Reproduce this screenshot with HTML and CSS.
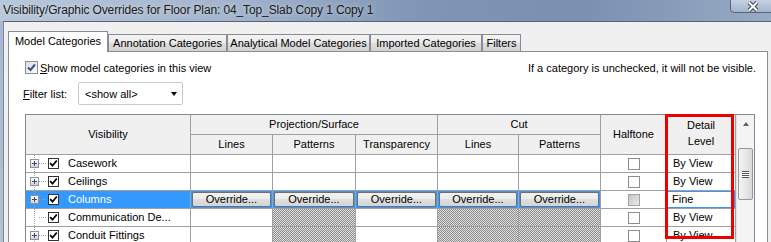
FILE: index.html
```html
<html lang="en">
<head>
<meta charset="UTF-8">
<title>Visibility/Graphic Overrides</title>
<link rel="stylesheet" href="styles.css">
</head>
<body>

<div class="window">
  <div class="titlebar">
    <span class="title">Visibility/Graphic Overrides for Floor Plan: 04_Top_Slab Copy 1 Copy 1</span>
    <div class="close-btn">
      <svg width="12" height="11" viewBox="0 0 12 11">
        <path d="M2 1.5 L10 9.5 M10 1.5 L2 9.5" stroke="#3b475a" stroke-width="4" fill="none"/>
        <path d="M2 1.5 L10 9.5 M10 1.5 L2 9.5" stroke="#fff" stroke-width="2" fill="none"/>
      </svg>
    </div>
  </div>

  <div class="client">
    <div class="tabs">
      <div class="tab active">Model Categories</div>
      <div class="tab">Annotation Categories</div>
      <div class="tab">Analytical Model Categories</div>
      <div class="tab">Imported Categories</div>
      <div class="tab">Filters</div>
    </div>

    <div class="tab-page">
      <div class="top-row">
        <label class="show-models">
          <span class="check-box">
            <svg width="11" height="11" viewBox="0 0 11 11"><path d="M2 5.5 L4.5 8 L9 2.5" fill="none" stroke="#3a4f8e" stroke-width="2"/></svg>
          </span>
          <span><u>S</u>how model categories in this view</span>
        </label>
        <span class="note">If a category is unchecked, it will not be visible.</span>
      </div>

      <div class="filter-row">
        <span><u>F</u>ilter list:</span>
        <div class="select">
          <span>&lt;show all&gt;</span>
          <span class="arrow"></span>
        </div>
      </div>

      <div class="grid-wrap">
        <div class="grid">
          <!-- header -->
          <div class="cell head tall">Visibility</div>
          <div class="cell head span3">Projection/Surface</div>
          <div class="cell head span2">Cut</div>
          <div class="cell head tall">Halftone</div>
          <div class="cell head tall two-line">Detail<br>Level</div>
          <div class="cell head">Lines</div>
          <div class="cell head">Patterns</div>
          <div class="cell head">Transparency</div>
          <div class="cell head">Lines</div>
          <div class="cell head">Patterns</div>

          <!-- Casework -->
          <div class="cell name">
            <span class="branch"><span class="expander"></span></span>
            <span class="tick"><svg width="9" height="9" viewBox="0 0 9 9"><path d="M1.2 4.2 L3.5 6.7 L7.8 1.5" fill="none" stroke="#000" stroke-width="1.8"/></svg></span>
            <span class="label">Casework</span>
          </div>
          <div class="cell"></div>
          <div class="cell"></div>
          <div class="cell"></div>
          <div class="cell"></div>
          <div class="cell"></div>
          <div class="cell mid"><span class="box"></span></div>
          <div class="cell detail">By View</div>

          <!-- Ceilings -->
          <div class="cell name">
            <span class="branch"><span class="expander"></span></span>
            <span class="tick"><svg width="9" height="9" viewBox="0 0 9 9"><path d="M1.2 4.2 L3.5 6.7 L7.8 1.5" fill="none" stroke="#000" stroke-width="1.8"/></svg></span>
            <span class="label">Ceilings</span>
          </div>
          <div class="cell"></div>
          <div class="cell"></div>
          <div class="cell"></div>
          <div class="cell"></div>
          <div class="cell"></div>
          <div class="cell mid"><span class="box"></span></div>
          <div class="cell detail">By View</div>

          <!-- Columns (selected) -->
          <div class="cell name sel">
            <span class="branch"><span class="expander"></span></span>
            <span class="tick"><svg width="9" height="9" viewBox="0 0 9 9"><path d="M1.2 4.2 L3.5 6.7 L7.8 1.5" fill="none" stroke="#000" stroke-width="1.8"/></svg></span>
            <span class="label">Columns</span>
          </div>
          <div class="cell over"><span class="override">Override...</span></div>
          <div class="cell over"><span class="override">Override...</span></div>
          <div class="cell over"><span class="override">Override...</span></div>
          <div class="cell over"><span class="override">Override...</span></div>
          <div class="cell over"><span class="override">Override...</span></div>
          <div class="cell mid"><span class="box dim"></span></div>
          <div class="cell detail edit">Fine</div>

          <!-- Communication Devices -->
          <div class="cell name">
            <span class="branch"></span>
            <span class="tick"><svg width="9" height="9" viewBox="0 0 9 9"><path d="M1.2 4.2 L3.5 6.7 L7.8 1.5" fill="none" stroke="#000" stroke-width="1.8"/></svg></span>
            <span class="label">Communication De...</span>
          </div>
          <div class="cell"></div>
          <div class="cell hatch"></div>
          <div class="cell"></div>
          <div class="cell hatch"></div>
          <div class="cell hatch"></div>
          <div class="cell mid"><span class="box"></span></div>
          <div class="cell detail">By View</div>

          <!-- Conduit Fittings -->
          <div class="cell name">
            <span class="branch"><span class="expander"></span></span>
            <span class="tick"><svg width="9" height="9" viewBox="0 0 9 9"><path d="M1.2 4.2 L3.5 6.7 L7.8 1.5" fill="none" stroke="#000" stroke-width="1.8"/></svg></span>
            <span class="label">Conduit Fittings</span>
          </div>
          <div class="cell"></div>
          <div class="cell hatch"></div>
          <div class="cell"></div>
          <div class="cell hatch"></div>
          <div class="cell hatch"></div>
          <div class="cell mid"><span class="box"></span></div>
          <div class="cell detail">By View</div>
        </div>

        <div class="scrollbar">
          <div class="scroll-up"></div>
          <div class="thumb"><span class="grip"></span></div>
        </div>

        <!-- red markup around the Detail Level column -->
        <div class="highlight"></div>
      </div>
    </div>
  </div>
</div>

</body>
</html>
```

FILE: styles.css
```css
* {
  box-sizing: border-box;
}
html, body {
  margin: 0;
  padding: 0;
}
body {
  width: 771px;
  height: 242px;
  overflow: hidden;
  font-family: "Liberation Sans", Arial, sans-serif;
  font-size: 11px;
  color: #000;
  background: #a9b9cf;
}
.window {
  height: 320px;
  display: flex;
  flex-direction: column;
  background: linear-gradient(to bottom, #a7b7ce, #b6c4d8);
}

/* title bar */
.titlebar {
  height: 21px;
  flex: none;
  display: flex;
  justify-content: space-between;
  align-items: flex-start;
  background: linear-gradient(to right, #b9c7db 0%, #a3b4cc 30%, #7f95b4 55%, #7a90b0 75%, #98aac4 100%);
}
.title {
  font-size: 12px;
  line-height: 21px;
  padding-left: 3px;
  color: #1b1b1b;
  white-space: nowrap;
  letter-spacing: -0.12px;
  text-shadow: 0 0 5px rgba(255, 255, 255, 0.6);
}
.close-btn {
  width: 46px;
  height: 14px;
  margin-top: -1px;
  margin-right: -5px;
  border: 1px solid #56657d;
  border-radius: 0 0 4px 4px;
  background: linear-gradient(#c6d2e2, #a4b4cb);
  display: flex;
  justify-content: center;
  align-items: center;
}

/* client area */
.client {
  flex: 1;
  margin-left: 3px;
  border-left: 1px solid #7d8797;
  border-top: 1px solid #56627a;
  background: #f0f0f0;
  padding: 9px 0 0 4px;
  display: flex;
  flex-direction: column;
}
.tabs {
  display: grid;
  grid-template-columns: 100px 119px 143px 112px 39px;
  align-items: end;
  height: 21px;
  flex: none;
  position: relative;
  z-index: 1;
}
.tab {
  height: 17px;
  margin-bottom: 1px;
  border: 1px solid #898c95;
  border-bottom: none;
  background: linear-gradient(#f3f3f3, #ebebeb 50%, #dedede 50%, #d2d2d2);
  text-align: center;
  line-height: 16px;
  white-space: nowrap;
}
.tab.active {
  height: 21px;
  margin-bottom: 0;
  background: #fff;
  line-height: 19px;
}
.tab-page {
  flex: 1;
  margin-top: -1px;
  margin-right: 3px;
  border: 1px solid #898c95;
  background: #fff;
  padding: 9px 11px 0 14px;
}

.top-row {
  display: flex;
  justify-content: space-between;
  align-items: center;
  height: 13px;
  padding-left: 2px;
}
.show-models {
  display: flex;
  align-items: center;
  gap: 2px;
}
.check-box {
  width: 13px;
  height: 13px;
  border: 1px solid #8e8f8f;
  background: linear-gradient(135deg, #dcdcdc, #fdfdfd);
  display: flex;
  align-items: center;
  justify-content: center;
}

.filter-row {
  display: flex;
  align-items: center;
  gap: 11px;
  margin-top: 8px;
  height: 23px;
}
.select {
  width: 105px;
  height: 23px;
  border: 1px solid #c8c9cc;
  border-radius: 2px;
  background: #fff;
  display: flex;
  justify-content: space-between;
  align-items: center;
  padding: 0 5px 0 6px;
}
.arrow {
  border-left: 3.5px solid transparent;
  border-right: 3.5px solid transparent;
  border-top: 4px solid #000;
  margin-top: 1px;
}

/* grid */
.grid-wrap {
  position: relative;
  display: flex;
  width: 730px;
  margin-top: 9px;
  margin-left: 2px;
  border: 1px solid #828790;
  border-bottom: none;
}
.grid {
  display: grid;
  grid-template-columns: 165px 82px 83px 82px 81px 82px 66px 69px;
  grid-template-rows: 20px 20px repeat(5, 18px);
  flex: none;
}
.cell {
  border-right: 1px solid #a0a0a0;
  border-bottom: 1px solid #a0a0a0;
  line-height: 17px;
  white-space: nowrap;
  overflow: hidden;
}
.head {
  background: #f0f0f0;
  display: flex;
  align-items: center;
  justify-content: center;
  line-height: 15px;
}
.head.tall {
  grid-row: span 2;
}
.head.span3 {
  grid-column: span 3;
}
.head.span2 {
  grid-column: span 2;
}
.head.two-line {
  align-items: flex-start;
  text-align: center;
  padding-top: 2px;
  line-height: 16px;
}

.name {
  display: flex;
  align-items: center;
}
.branch {
  width: 21px;
  height: 17px;
  flex: none;
  background:
    repeating-linear-gradient(to bottom, #a0a0a0 0 1px, transparent 1px 2px) 8px 0 / 1px 100% no-repeat,
    repeating-linear-gradient(to right, #a0a0a0 0 1px, transparent 1px 2px) 13px 8px / 8px 1px no-repeat;
}
.expander {
  display: block;
  width: 9px;
  height: 9px;
  margin: 4px 0 0 4px;
  border: 1px solid #919191;
  background:
    linear-gradient(#2f4f80, #2f4f80) center / 5px 1px no-repeat,
    linear-gradient(#2f4f80, #2f4f80) center / 1px 5px no-repeat,
    linear-gradient(#ffffff, #d4d4d4);
}
.tick {
  width: 11px;
  height: 11px;
  flex: none;
  margin-left: 1px;
  border: 1px solid #333;
  background: #fff;
  display: flex;
  align-items: center;
  justify-content: center;
}
.label {
  margin-left: 9px;
}
.name.sel {
  background: #3399ff;
  color: #fff;
}

.over {
  background: #3399ff;
  padding: 1px;
}
.override {
  display: flex;
  height: 100%;
  align-items: center;
  justify-content: center;
  border: 1px solid #707070;
  border-radius: 2px;
  background: linear-gradient(#f2f2f2, #ebebeb 50%, #dfdfdf 50%, #d4d4d4);
  line-height: 13px;
  color: #000;
}

.mid {
  display: flex;
  align-items: center;
  justify-content: center;
}
.box {
  width: 12px;
  height: 12px;
  border: 1px solid #8f8f8f;
  background: #fff;
}
.box.dim {
  border-color: #a2a2a2;
  background: linear-gradient(135deg, #c4c4c4, #ececec);
}

.detail {
  padding-left: 6px;
}
.detail.edit {
  padding-left: 5px;
  box-shadow: inset 0 0 0 1px #3399ff;
}

.hatch {
  background: repeating-conic-gradient(#8a8a8a 0 25%, #e2e2e2 0 50%) 0 0 / 2px 2px;
}

/* vertical scrollbar */
.scrollbar {
  width: 18px;
  flex: none;
  background: #f4f4f4;
  border-left: 1px solid #e3e3e3;
  display: flex;
  flex-direction: column;
  align-items: center;
}
.scroll-up {
  height: 17px;
  width: 100%;
  display: flex;
  align-items: center;
  justify-content: center;
}
.scroll-up::before {
  content: "";
  border-left: 3.5px solid transparent;
  border-right: 3.5px solid transparent;
  border-bottom: 4px solid #606060;
}
.thumb {
  margin-top: 16px;
  width: 15px;
  height: 52px;
  border: 1px solid #979797;
  border-radius: 2px;
  background: linear-gradient(to right, #f3f3f3, #e8e8e8 50%, #d8d8d8);
  display: flex;
  align-items: center;
  justify-content: center;
}
.grip {
  width: 7px;
  height: 7px;
  background: repeating-linear-gradient(#555 0 1px, #fbfbfb 1px 2px);
}

.highlight {
  position: absolute;
  left: 639px;
  top: -1px;
  width: 69px;
  height: 125px;
  border: 3px solid #ec0000;
}
```
